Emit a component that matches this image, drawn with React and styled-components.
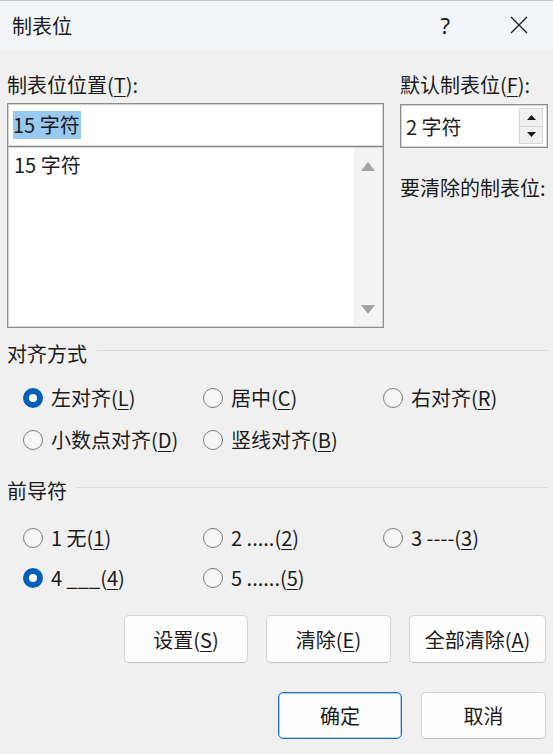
import React from "react";
import styled, { createGlobalStyle } from "styled-components";

const GlobalStyle = createGlobalStyle`
  html, body {
    margin: 0;
    padding: 0;
    background: #f0f0f0;
  }
  body {
    font-family: "Noto Sans CJK SC", "Noto Sans", sans-serif;
    color: #1b1b1b;
  }
`;

const alignOptions = [
  { text: "左对齐", key: "L", checked: true },
  { text: "居中", key: "C" },
  { text: "右对齐", key: "R" },
  { text: "小数点对齐", key: "D" },
  { text: "竖线对齐", key: "B" },
];

const leaderOptions = [
  { text: "1 无", key: "1" },
  { text: "2 .....", key: "2" },
  { text: "3 ----", key: "3" },
  { text: "4 ___", key: "4", checked: true },
  { text: "5 ......", key: "5" },
];

const Accel = ({ label, k }) => (
  <>
    {label}(<U>{k}</U>)
  </>
);

const Radio = ({ checked, children }) => (
  <RadioItem>
    <RadioCircle checked={checked} />
    <RadioLabel>{children}</RadioLabel>
  </RadioItem>
);

const App = () => {
  return (
    <>
      <GlobalStyle />
      <Dialog>
        <TitleBar>
          <Title>制表位</Title>
          <TitleActions>
            <HelpMark>?</HelpMark>
            <svg width="18" height="18" viewBox="0 0 18 18">
              <path d="M1 1 L17 17 M17 1 L1 17" stroke="#1b1b1b" strokeWidth="1.3" fill="none" />
            </svg>
          </TitleActions>
        </TitleBar>

        <Body>
          <TopGrid>
            <Column>
              <FieldLabel>
                制表位位置(<U>T</U>):
              </FieldLabel>
              <TextBox>
                <Selected>15 字符</Selected>
              </TextBox>
              <ListBox>
                <ListItems>
                  <ListItem>15 字符</ListItem>
                </ListItems>
                <ScrollTrack>
                  <svg width="14" height="9" viewBox="0 0 14 9">
                    <path d="M7 0 L14 9 L0 9 Z" fill="#a3a3a3" />
                  </svg>
                  <svg width="14" height="9" viewBox="0 0 14 9">
                    <path d="M0 0 L14 0 L7 9 Z" fill="#a3a3a3" />
                  </svg>
                </ScrollTrack>
              </ListBox>
            </Column>

            <Column>
              <FieldLabel>
                默认制表位(<U>F</U>):
              </FieldLabel>
              <SpinBox>
                <SpinValue>2 字符</SpinValue>
                <SpinButtons>
                  <SpinButton>
                    <svg width="9" height="5" viewBox="0 0 9 5">
                      <path d="M4.5 0 L9 5 L0 5 Z" fill="#1b1b1b" />
                    </svg>
                  </SpinButton>
                  <SpinButton>
                    <svg width="9" height="5" viewBox="0 0 9 5">
                      <path d="M0 0 L9 0 L4.5 5 Z" fill="#1b1b1b" />
                    </svg>
                  </SpinButton>
                </SpinButtons>
              </SpinBox>
              <ClearLabel>要清除的制表位:</ClearLabel>
            </Column>
          </TopGrid>

          <GroupHeader top={14}>
            <span>对齐方式</span>
            <Rule />
          </GroupHeader>
          <RadioGrid top={11} rowHeight={42}>
            {alignOptions.map((o) => (
              <Radio key={o.key} checked={o.checked}>
                <Accel label={o.text} k={o.key} />
              </Radio>
            ))}
          </RadioGrid>

          <GroupHeader top={18}>
            <span>前导符</span>
            <Rule />
          </GroupHeader>
          <RadioGrid top={15} rowHeight={40}>
            {leaderOptions.map((o) => (
              <Radio key={o.key} checked={o.checked}>
                <Accel label={o.text} k={o.key} />
              </Radio>
            ))}
          </RadioGrid>

          <ButtonRow top={17} gap={18}>
            <Button width={124}>
              <Accel label="设置" k="S" />
            </Button>
            <Button width={125}>
              <Accel label="清除" k="E" />
            </Button>
            <Button width={137}>
              <Accel label="全部清除" k="A" />
            </Button>
          </ButtonRow>

          <ButtonRow top={29} gap={19}>
            <Button width={124} height={47} primary>
              确定
            </Button>
            <Button width={125} height={47}>
              取消
            </Button>
          </ButtonRow>
        </Body>
      </Dialog>
    </>
  );
};

const Dialog = styled.div`
  width: 553px;
  height: 754px;
  display: flex;
  flex-direction: column;
  overflow: hidden;
  font-size: 20px;
`;

const TitleBar = styled.div`
  height: 49px;
  box-sizing: border-box;
  border-top: 1px solid #c4c4c4;
  background: #f3f5f8;
  display: flex;
  align-items: center;
  padding: 0 25px 0 12px;
`;

const Title = styled.div`
  font-size: 20px;
`;

const TitleActions = styled.div`
  margin-left: auto;
  display: flex;
  align-items: center;
  gap: 60px;
`;

const HelpMark = styled.span`
  font-size: 22px;
  font-family: "Noto Sans", sans-serif;
`;

const Body = styled.div`
  padding: 24px 5px 0 7px;
  display: flex;
  flex-direction: column;
`;

const U = styled.u`
  text-underline-offset: 3px;
  text-decoration-thickness: 1px;
`;

const TopGrid = styled.div`
  display: grid;
  grid-template-columns: 377px 148px;
  column-gap: 16px;
`;

const Column = styled.div`
  display: flex;
  flex-direction: column;
`;

const FieldLabel = styled.div`
  line-height: 24px;
  margin-bottom: 6px;
`;

const TextBox = styled.div`
  height: 44px;
  box-sizing: border-box;
  background: #fff;
  border: 1px solid #8e8e8e;
  box-shadow: inset 0 0 0 1px #d4d4d4;
  display: flex;
  align-items: center;
  padding-left: 5px;
`;

const Selected = styled.span`
  background: #99c9ef;
  line-height: 28px;
  padding-right: 1px;
`;

const ListBox = styled.div`
  height: 181px;
  box-sizing: border-box;
  background: #fff;
  border: 1px solid #8e8e8e;
  border-top: none;
  box-shadow: inset 0 0 0 1px #d4d4d4;
  display: flex;
`;

const ListItems = styled.div`
  flex: 1;
  padding: 6px 0 0 6px;
`;

const ListItem = styled.div`
  line-height: 24px;
`;

const ScrollTrack = styled.div`
  width: 28px;
  margin: 1px 1px 1px 0;
  background: #f4f4f4;
  display: flex;
  flex-direction: column;
  align-items: center;
  justify-content: space-between;
  padding: 14px 0 12px;
`;

const SpinBox = styled.div`
  height: 44px;
  margin-top: 1px;
  box-sizing: border-box;
  background: #fff;
  border: 1px solid #8e8e8e;
  box-shadow: inset 0 0 0 1px #d4d4d4;
  display: flex;
  align-items: center;
  padding: 0 4px 0 5px;
`;

const SpinValue = styled.span`
  flex: 1;
`;

const SpinButtons = styled.div`
  display: flex;
  flex-direction: column;
  width: 24px;
  height: 36px;
`;

const SpinButton = styled.div`
  flex: 1;
  background: #f0f0f0;
  border: 1px solid #d6d6d6;
  display: flex;
  align-items: center;
  justify-content: center;
  & + & {
    border-top: none;
  }
`;

const ClearLabel = styled.div`
  line-height: 24px;
  margin-top: 28px;
`;

const GroupHeader = styled.div`
  margin-top: ${(p) => p.top}px;
  display: flex;
  align-items: center;
  gap: 10px;
  line-height: 24px;
`;

const Rule = styled.div`
  flex: 1;
  height: 1px;
  background: #dadada;
  margin-bottom: 8px;
`;

const RadioGrid = styled.div`
  margin-top: ${(p) => p.top}px;
  padding-left: 16px;
  display: grid;
  grid-template-columns: repeat(3, 180px);
  grid-auto-rows: ${(p) => p.rowHeight}px;
  align-items: center;
`;

const RadioItem = styled.div`
  display: flex;
  align-items: center;
  gap: 8px;
  white-space: nowrap;
`;

const RadioCircle = styled.span`
  width: 20px;
  height: 20px;
  box-sizing: border-box;
  border-radius: 50%;
  flex: none;
  position: relative;
  background: ${(p) => (p.checked ? "#005fb8" : "#f6f6f6")};
  border: ${(p) => (p.checked ? "none" : "1px solid #7c7c7c")};
  &::after {
    content: "";
    display: ${(p) => (p.checked ? "block" : "none")};
    position: absolute;
    left: 6px;
    top: 6px;
    width: 8px;
    height: 8px;
    border-radius: 50%;
    background: #fff;
  }
`;

const RadioLabel = styled.span`
  line-height: 24px;
`;

const ButtonRow = styled.div`
  margin-top: ${(p) => p.top}px;
  margin-right: 2px;
  display: flex;
  justify-content: flex-end;
  gap: ${(p) => p.gap}px;
`;

const Button = styled.div`
  width: ${(p) => p.width}px;
  height: ${(p) => p.height || 48}px;
  box-sizing: border-box;
  background: #fdfdfd;
  border: 1px solid ${(p) => (p.primary ? "#1f6fc5" : "#d3d3d3")};
  border-bottom-color: ${(p) => (p.primary ? "#1f6fc5" : "#c2c2c2")};
  box-shadow: ${(p) => (p.primary ? "inset 0 0 0 1px rgba(31,111,197,0.35)" : "none")};
  border-radius: 5px;
  display: flex;
  align-items: center;
  justify-content: center;
`;

export default App;
